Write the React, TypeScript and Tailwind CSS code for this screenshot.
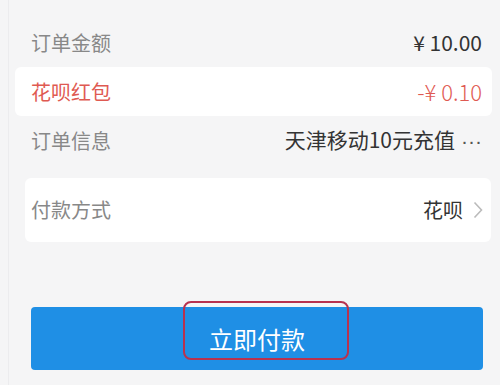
export default function App() {
  const font = { fontFamily: '"Noto Sans CJK SC", "Noto Sans", sans-serif' };
  return (
    <div className="h-[385px] w-[500px] overflow-hidden bg-[#f5f5f6]" style={font}>
      <div className="ml-[8px] h-full border-l border-[#ececee]">
        <div className="h-[18px]" />
        <Row label="订单金额" value="¥ 10.00" className="pl-[22px] pr-[18px]" />
        <div className="ml-[6px] mr-[8px] rounded-md bg-white">
          <Row label="花呗红包" value="-¥ 0.10" red className="pl-[16px] pr-[10px]" />
        </div>
        <Row
          label="订单信息"
          value={
            <>
              天津移动10元充值
              <span className="ml-[6px] text-[#555]" style={{ fontFamily: '"Liberation Sans", sans-serif' }}>
                ···
              </span>
            </>
          }
          className="pl-[22px] pr-[18px]"
        />
        <div className="ml-[16px] mr-[9px] mt-[13px] flex h-[64px] items-center justify-between rounded-md bg-white pl-[6px] pr-[8px]">
          <span className="text-[20px] text-[#888]">付款方式</span>
          <span className="flex items-center gap-[10px] text-[20px] text-[#333]">
            花呗
            <svg width="10" height="18" viewBox="0 0 10 18" fill="none">
              <path d="M1.5 1.5 8.5 9 1.5 16.5" stroke="#bbb" strokeWidth="1.6" />
            </svg>
          </span>
        </div>
        <div className="relative ml-[22px] mr-[17px] mt-[65px]">
          <button className="flex h-[63px] w-full items-center justify-center rounded-sm bg-[#1f8fe5] text-[24px] text-white">
            立即付款
          </button>
          <div className="absolute left-[152px] top-[-6px] h-[59px] w-[166px] rounded-lg border-2 border-[#b8324f]" />
        </div>
      </div>
    </div>
  );
}

function Row({
  label,
  value,
  red,
  className,
}: {
  label: string;
  value: React.ReactNode;
  red?: boolean;
  className?: string;
}) {
  return (
    <div className={"flex h-[49px] items-center justify-between " + (className ?? "")}>
      <span className={red ? "text-[20px] text-[#df5a52]" : "text-[20px] text-[#888]"}>{label}</span>
      <span className={red ? "text-[22px] font-light text-[#df5a52]" : "text-[21px] text-[#333]"}>{value}</span>
    </div>
  );
}
